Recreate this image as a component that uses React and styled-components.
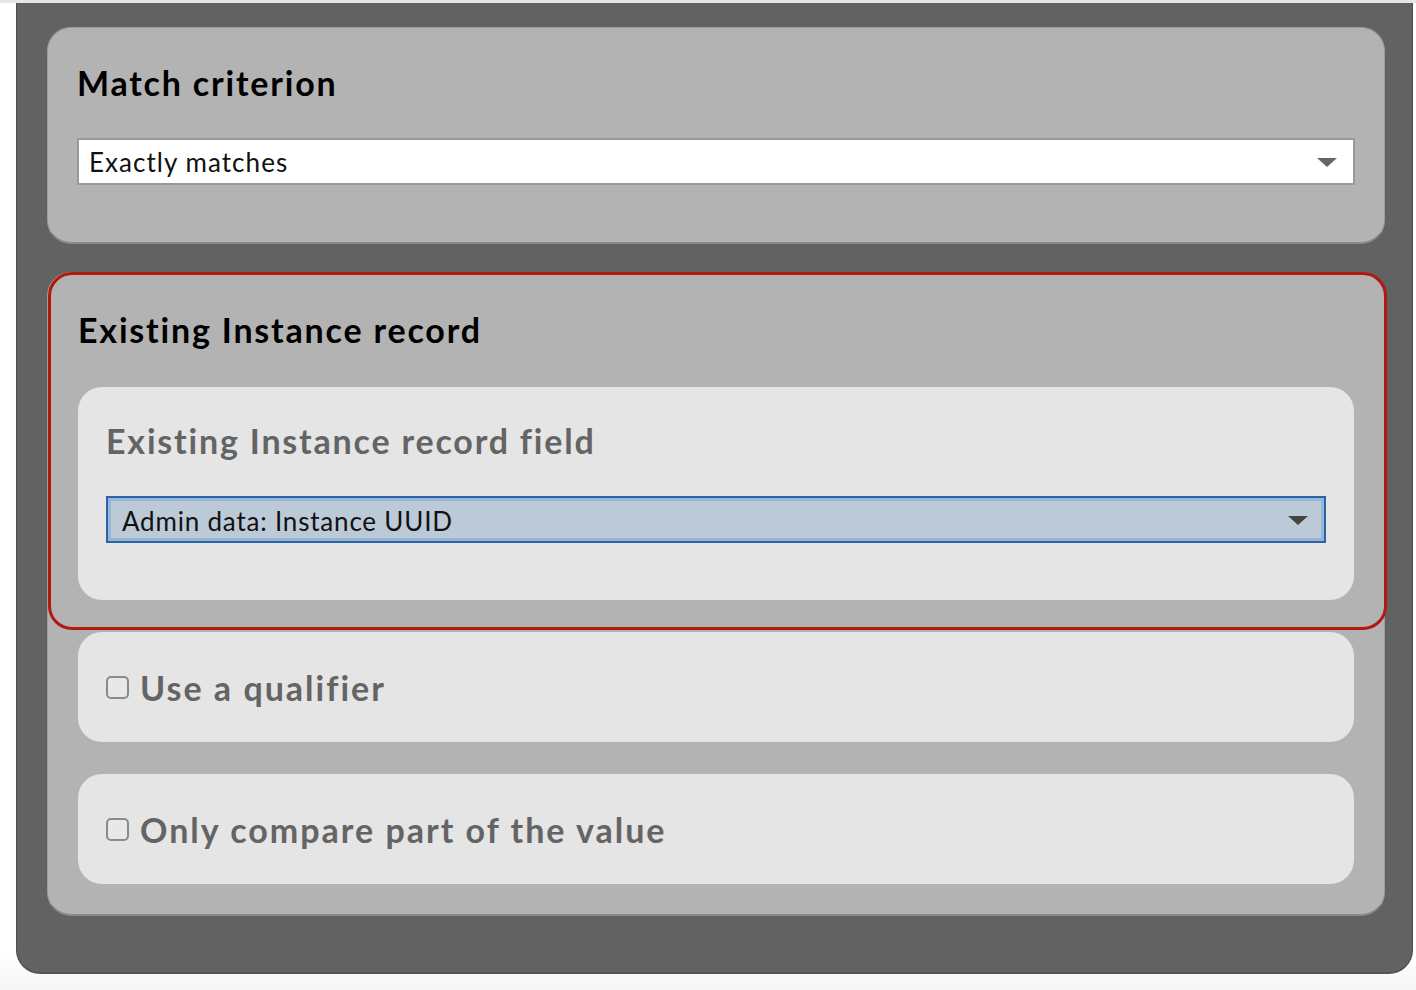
import React from 'react'
import styled, {createGlobalStyle} from 'styled-components'

const GlobalStyle = createGlobalStyle`
html, body {
  margin: 0;
  padding: 0;
}
body {
  background: #fff;
  font-family: Lato, "Liberation Sans", sans-serif;
  font-variant-ligatures: none;
}
`

const Page = styled.div`
min-height: 990px;
box-sizing: border-box;
border-top: 3px solid #e6e6e6;
padding: 0 3px 0 16px;
background: linear-gradient(to bottom, #fff 950px, #f4f4f4 990px);
`

const Panel = styled.div`
background: #626262;
border-left: 1px solid #4e4e4e;
border-right: 1px solid #4e4e4e;
border-bottom: 2px solid #555;
border-radius: 0 0 24px 24px;
padding: 24px 27px 56px 30px;
display: flex;
flex-direction: column;
gap: 28px;
`

const Card = styled.section`
background: #b3b3b3;
border: 1px solid #9c9c9c;
border-bottom: 2px solid #8a8a8a;
border-radius: 24px;
padding: ${props => props.$pad || '0'};
display: flex;
flex-direction: column;
`

const Focus = styled.div`
border: 3px solid #b3190f;
border-radius: 24px;
margin: -1px -3px 0 0;
padding: 35px 30px 27px 27px;
display: flex;
flex-direction: column;
`

const Stack = styled.div`
padding: 2px 30px 30px 30px;
display: flex;
flex-direction: column;
gap: 32px;
`

const Title = styled.h2`
margin: 0 0 ${props => props.$gap || '34px'} 0;
font-size: 34px;
line-height: 1.2;
font-weight: 700;
letter-spacing: 1.8px;
color: ${props => props.$muted ? '#646464' : '#000'};
`

const Inner = styled.div`
background: #e5e5e5;
border-radius: 24px;
padding: ${props => props.$row ? '0 28px' : '34px 28px 57px 28px'};
height: ${props => props.$row ? '110px' : 'auto'};
box-sizing: border-box;
display: flex;
flex-direction: ${props => props.$row ? 'row' : 'column'};
align-items: ${props => props.$row ? 'center' : 'stretch'};
`

const Select = styled.div`
height: 47px;
box-sizing: border-box;
display: flex;
align-items: center;
justify-content: space-between;
padding: 2px 16px 0 ${props => props.$focused ? '14px' : '10px'};
background: ${props => props.$focused ? '#bccad7' : '#fff'};
border: 2px solid ${props => props.$focused ? '#2b63a6' : '#999'};
box-shadow: ${props => props.$focused ? 'inset 0 0 0 3px #96b4d5' : 'none'};
font-size: 26px;
letter-spacing: ${props => props.$focused ? '0.8px' : '1.05px'};
color: #111;
`

const Arrow = styled.span`
width: 0;
height: 0;
border-left: 10px solid transparent;
border-right: 10px solid transparent;
border-top: 9px solid ${props => props.$dark ? '#454545' : '#666'};
`

const Check = styled.span`
width: 23px;
height: 23px;
box-sizing: border-box;
border: 2px solid #8a8a8a;
border-radius: 5px;
background: #e8e8e8;
margin-right: 11px;
flex-shrink: 0;
`

const CheckLabel = styled.label`
font-size: 34px;
font-weight: 700;
letter-spacing: 2px;
color: #646464;
display: flex;
align-items: center;
`

const App = () => {
    return (
        <Page>
            <GlobalStyle/>
            <Panel>
                <Card $pad="35px 29px 57px 29px">
                    <Title>Match criterion</Title>
                    <Select>
                        Exactly matches
                        <Arrow/>
                    </Select>
                </Card>

                <Card>
                    <Focus>
                        <Title $gap="36px">Existing Instance record</Title>
                        <Inner>
                            <Title $muted $gap="35px">Existing Instance record field</Title>
                            <Select $focused>
                                Admin data: Instance UUID
                                <Arrow $dark/>
                            </Select>
                        </Inner>
                    </Focus>
                    <Stack>
                        <Inner $row>
                            <CheckLabel><Check/>Use a qualifier</CheckLabel>
                        </Inner>
                        <Inner $row>
                            <CheckLabel><Check/>Only compare part of the value</CheckLabel>
                        </Inner>
                    </Stack>
                </Card>
            </Panel>
        </Page>
    )
}

export default App
